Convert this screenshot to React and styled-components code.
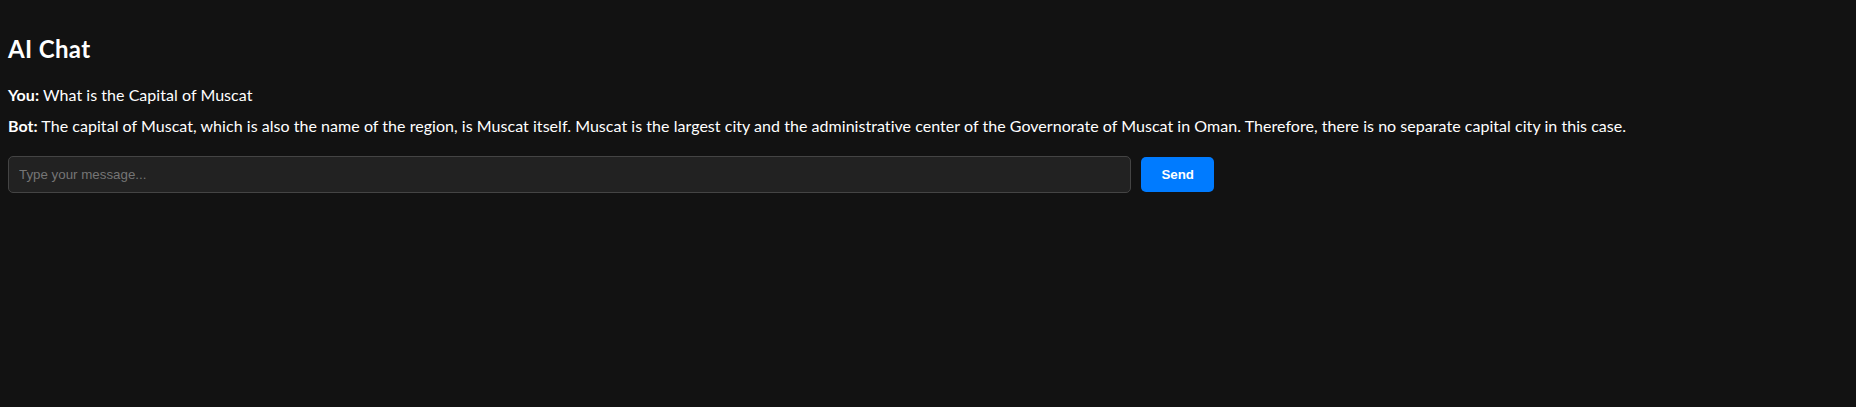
import React, { useState } from "react";
import styled, { createGlobalStyle } from "styled-components";

const GlobalStyle = createGlobalStyle`
  html, body {
    margin: 0;
    padding: 0;
    background: #121212;
  }
  body {
    color: #ffffff;
    font-family: Lato, "Noto Sans", sans-serif;
  }
`;

const Page = styled.div`
  min-height: 407px;
  padding: 35px 8px 0;
  box-sizing: border-box;
`;

const Title = styled.h2`
  margin: 0 0 20px;
  font-size: 24px;
  line-height: 1.2;
  font-weight: 700;
  letter-spacing: 0.35px;
`;

const Messages = styled.div`
  display: flex;
  flex-direction: column;
  gap: 10px;
  margin-bottom: 20px;
`;

const Message = styled.div`
  font-size: 16px;
  line-height: 21px;
  letter-spacing: 0.04px;
  strong {
    font-weight: 700;
  }
`;

const InputRow = styled.form`
  display: flex;
  align-items: center;
  gap: 10px;
  max-width: 1206px;
`;

const TextInput = styled.input`
  flex: 1;
  padding: 10px;
  border: 1px solid #444;
  border-radius: 5px;
  background: #222;
  color: #fff;
  font-family: "Liberation Sans", Arial, sans-serif;
  font-size: 13.33px;
  line-height: 15px;
  outline: none;
  &::placeholder {
    color: #757575;
  }
`;

const SendButton = styled.button`
  padding: 10px 20px;
  border: none;
  border-radius: 5px;
  background: #007bff;
  color: #fff;
  font-family: "Liberation Sans", Arial, sans-serif;
  font-size: 13.33px;
  line-height: 15px;
  font-weight: 700;
  cursor: pointer;
`;

const initialMessages = [
  { from: "You", text: "What is the Capital of Muscat" },
  {
    from: "Bot",
    text: "The capital of Muscat, which is also the name of the region, is Muscat itself. Muscat is the largest city and the administrative center of the Governorate of Muscat in Oman. Therefore, there is no separate capital city in this case.",
  },
];

const App = () => {
  const [messages] = useState(initialMessages);
  const [value, setValue] = useState("");

  return (
    <Page>
      <GlobalStyle />
      <Title>AI Chat</Title>
      <Messages>
        {messages.map((m, i) => (
          <Message key={i}>
            <strong>{m.from}:</strong> {m.text}
          </Message>
        ))}
      </Messages>
      <InputRow onSubmit={(e) => e.preventDefault()}>
        <TextInput
          value={value}
          onChange={(e) => setValue(e.target.value)}
          placeholder="Type your message..."
        />
        <SendButton type="submit">Send</SendButton>
      </InputRow>
    </Page>
  );
};

export default App;
